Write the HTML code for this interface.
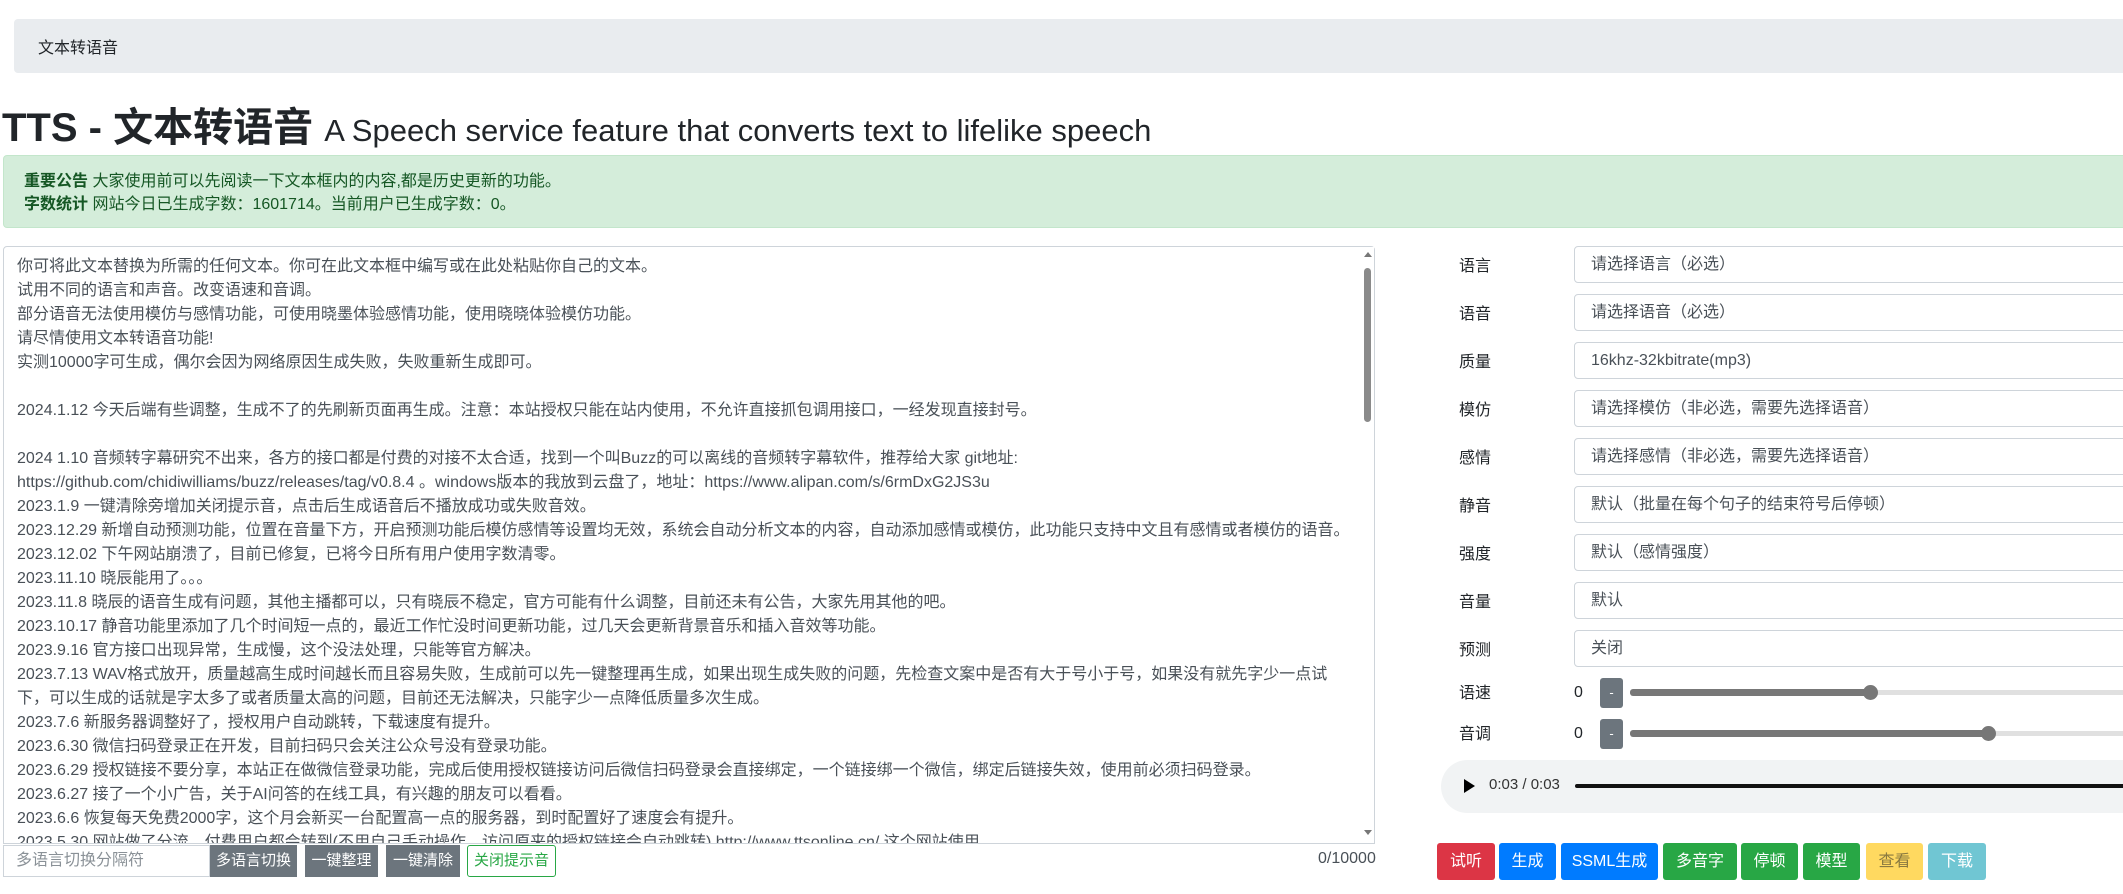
<!DOCTYPE html>
<html><head><meta charset="utf-8"><style>
*{box-sizing:border-box;margin:0;padding:0}
body{width:2123px;height:894px;overflow:hidden;background:#fff;font-family:"Liberation Sans","Noto Sans CJK SC",sans-serif;color:#212529;position:relative;font-size:16px}
.abs{position:absolute}
.bc{left:14px;top:19px;width:2200px;height:54px;background:#e9ecef;border-radius:4px}
.bc span{position:absolute;left:24px;top:15px;font-size:16px}
.title{left:2px;top:104px;font-size:40px;font-weight:bold;white-space:nowrap;line-height:48px}
.title small{font-size:31px;font-weight:400}
.alert{left:3px;top:155px;width:2200px;height:73px;background:#d4edda;border:1px solid #c3e6cb;border-radius:4px;color:#155724;padding:14px 20px;font-size:16px;line-height:23px}
.ta{left:3px;top:246px;width:1372px;height:598px;border:1px solid #ced4da;border-radius:4px 4px 0 0;overflow:hidden;padding:8px 0 0 13px;font-size:16px;line-height:24px;color:#495057;white-space:nowrap}
.sb{left:1360px;top:247px;width:14px;height:596px;background:#fff}
.thumb{left:1364px;top:268px;width:7px;height:154px;background:#8a8a8a;border-radius:4px}
.inp{left:3px;width:207px;border:1px solid #ced4da;color:#8a9197;padding:5px 12px;font-size:16px;line-height:20px;top:845px;height:32px}
.gb{background:#6c757d;color:#fff;font-size:15px;text-align:center;line-height:32px;top:845px;height:32px}
.lab{left:1459px;font-size:16px;line-height:20px}
.sel{left:1574px;width:700px;height:37px;border:1px solid #ced4da;border-radius:4px;padding:0 16px;line-height:35px;color:#495057;font-size:16px}
.btn{top:843px;height:37px;line-height:37px;color:#fff;text-align:center;font-size:16px;border-radius:3px}
</style></head><body>
<div class="abs bc"><span>文本转语音</span></div>
<div class="abs title">TTS - 文本转语音 <small>A Speech service feature that converts text to lifelike speech</small></div>
<div class="abs alert"><b>重要公告</b> 大家使用前可以先阅读一下文本框内的内容,都是历史更新的功能。<br><b>字数统计</b> 网站今日已生成字数：1601714。当前用户已生成字数：0。</div>
<div class="abs ta">你可将此文本替换为所需的任何文本。你可在此文本框中编写或在此处粘贴你自己的文本。<br>试用不同的语言和声音。改变语速和音调。<br>部分语音无法使用模仿与感情功能，可使用晓墨体验感情功能，使用晓晓体验模仿功能。<br>请尽情使用文本转语音功能!<br>实测10000字可生成，偶尔会因为网络原因生成失败，失败重新生成即可。<br><br>2024.1.12 今天后端有些调整，生成不了的先刷新页面再生成。注意：本站授权只能在站内使用，不允许直接抓包调用接口，一经发现直接封号。<br><br>2024 1.10 音频转字幕研究不出来，各方的接口都是付费的对接不太合适，找到一个叫Buzz的可以离线的音频转字幕软件，推荐给大家 git地址:<br>https://github.com/chidiwilliams/buzz/releases/tag/v0.8.4 。windows版本的我放到云盘了，地址：https://www.alipan.com/s/6rmDxG2JS3u<br>2023.1.9 一键清除旁增加关闭提示音，点击后生成语音后不播放成功或失败音效。<br>2023.12.29 新增自动预测功能，位置在音量下方，开启预测功能后模仿感情等设置均无效，系统会自动分析文本的内容，自动添加感情或模仿，此功能只支持中文且有感情或者模仿的语音。<br>2023.12.02 下午网站崩溃了，目前已修复，已将今日所有用户使用字数清零。<br>2023.11.10 晓辰能用了。。。<br>2023.11.8 晓辰的语音生成有问题，其他主播都可以，只有晓辰不稳定，官方可能有什么调整，目前还未有公告，大家先用其他的吧。<br>2023.10.17 静音功能里添加了几个时间短一点的，最近工作忙没时间更新功能，过几天会更新背景音乐和插入音效等功能。<br>2023.9.16 官方接口出现异常，生成慢，这个没法处理，只能等官方解决。<br>2023.7.13 WAV格式放开，质量越高生成时间越长而且容易失败，生成前可以先一键整理再生成，如果出现生成失败的问题，先检查文案中是否有大于号小于号，如果没有就先字少一点试<br>下，可以生成的话就是字太多了或者质量太高的问题，目前还无法解决，只能字少一点降低质量多次生成。<br>2023.7.6 新服务器调整好了，授权用户自动跳转，下载速度有提升。<br>2023.6.30 微信扫码登录正在开发，目前扫码只会关注公众号没有登录功能。<br>2023.6.29 授权链接不要分享，本站正在做微信登录功能，完成后使用授权链接访问后微信扫码登录会直接绑定，一个链接绑一个微信，绑定后链接失效，使用前必须扫码登录。<br>2023.6.27 接了一个小广告，关于AI问答的在线工具，有兴趣的朋友可以看看。<br>2023.6.6 恢复每天免费2000字，这个月会新买一台配置高一点的服务器，到时配置好了速度会有提升。<br>2023.5.30 网站做了分流，付费用户都会转到(不用自己手动操作，访问原来的授权链接会自动跳转) http://www.ttsonline.cn/ 这个网站使用</div>
<div class="abs sb"></div>
<div class="abs" style="left:1364px;top:252px;width:0;height:0;border:4px solid transparent;border-bottom:5px solid #777;border-top:0"></div>
<div class="abs" style="left:1364px;top:830px;width:0;height:0;border:4px solid transparent;border-top:5px solid #777;border-bottom:0"></div>
<div class="abs thumb"></div>
<div class="abs inp">多语言切换分隔符</div>
<div class="abs gb" style="left:210px;width:87px">多语言切换</div>
<div class="abs gb" style="left:305px;width:73px">一键整理</div>
<div class="abs gb" style="left:386px;width:74px">一键清除</div>
<div class="abs" style="left:467px;top:845px;width:89px;height:32px;border:1px solid #28a745;color:#28a745;font-size:15px;text-align:center;line-height:30px;border-radius:3px">关闭提示音</div>
<div class="abs" style="left:1318px;top:850px;font-size:16px;color:#495057">0/10000</div>

<div class="abs lab" style="top:257px">语言</div><div class="abs sel" style="top:246px">请选择语言（必选）</div>
<div class="abs lab" style="top:305px">语音</div><div class="abs sel" style="top:294px">请选择语音（必选）</div>
<div class="abs lab" style="top:353px">质量</div><div class="abs sel" style="top:342px">16khz-32kbitrate(mp3)</div>
<div class="abs lab" style="top:401px">模仿</div><div class="abs sel" style="top:390px">请选择模仿（非必选，需要先选择语音）</div>
<div class="abs lab" style="top:449px">感情</div><div class="abs sel" style="top:438px">请选择感情（非必选，需要先选择语音）</div>
<div class="abs lab" style="top:497px">静音</div><div class="abs sel" style="top:486px">默认（批量在每个句子的结束符号后停顿）</div>
<div class="abs lab" style="top:545px">强度</div><div class="abs sel" style="top:534px">默认（感情强度）</div>
<div class="abs lab" style="top:593px">音量</div><div class="abs sel" style="top:582px">默认</div>
<div class="abs lab" style="top:641px">预测</div><div class="abs sel" style="top:630px">关闭</div>

<div class="abs lab" style="top:684px">语速</div>
<div class="abs" style="left:1574px;top:684px">0</div>
<div class="abs" style="left:1600px;top:678px;width:23px;height:30px;background:#6c757d;color:#fff;border-radius:3px;text-align:center;line-height:30px;font-size:13px">-</div>
<div class="abs" style="left:1630px;top:690px;width:600px;height:5px;background:#e0e0e0;border-radius:3px"></div>
<div class="abs" style="left:1630px;top:689px;width:240px;height:7px;background:#777;border-radius:3px"></div>
<div class="abs" style="left:1863px;top:685px;width:15px;height:15px;background:#777;border-radius:50%"></div>

<div class="abs lab" style="top:725px">音调</div>
<div class="abs" style="left:1574px;top:725px">0</div>
<div class="abs" style="left:1600px;top:719px;width:23px;height:30px;background:#6c757d;color:#fff;border-radius:3px;text-align:center;line-height:30px;font-size:13px">-</div>
<div class="abs" style="left:1630px;top:731px;width:600px;height:5px;background:#e0e0e0;border-radius:3px"></div>
<div class="abs" style="left:1630px;top:730px;width:358px;height:7px;background:#777;border-radius:3px"></div>
<div class="abs" style="left:1981px;top:726px;width:15px;height:15px;background:#777;border-radius:50%"></div>

<div class="abs" style="left:1441px;top:760px;width:800px;height:53px;background:#f1f3f4;border-radius:27px"></div>
<div class="abs" style="left:1464px;top:779px;width:0;height:0;border-top:7px solid transparent;border-bottom:7px solid transparent;border-left:11px solid #000"></div>
<div class="abs" style="left:1489px;top:776px;font-size:15px;color:#333">0:03 / 0:03</div>
<div class="abs" style="left:1575px;top:784px;width:600px;height:4px;background:#111;border-radius:2px"></div>

<div class="abs btn" style="left:1437px;width:58px;background:#dc3545">试听</div>
<div class="abs btn" style="left:1499px;width:57px;background:#007bff">生成</div>
<div class="abs btn" style="left:1561px;width:97px;background:#007bff">SSML生成</div>
<div class="abs btn" style="left:1663px;width:74px;background:#28a745">多音字</div>
<div class="abs btn" style="left:1741px;width:57px;background:#28a745">停顿</div>
<div class="abs btn" style="left:1803px;width:57px;background:#28a745">模型</div>
<div class="abs btn" style="left:1866px;width:57px;background:#ffd960;color:#8a7a40">查看</div>
<div class="abs btn" style="left:1928px;width:58px;background:#70c6d3">下载</div>
</body></html>
